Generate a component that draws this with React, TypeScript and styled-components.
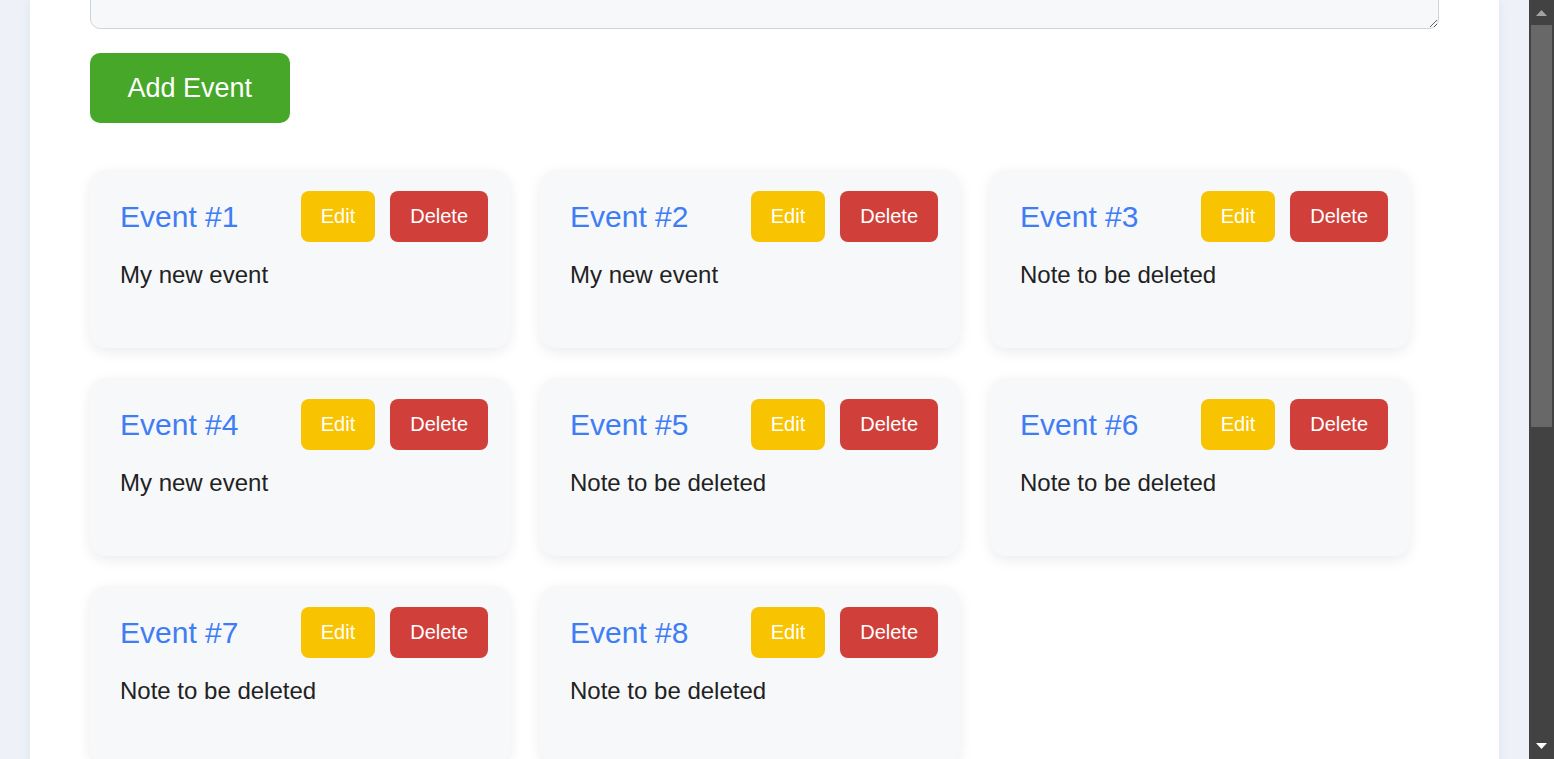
import React from "react";
import styled, { createGlobalStyle } from "styled-components";

const GlobalStyle = createGlobalStyle`
  html, body {
    margin: 0;
    padding: 0;
    height: 100%;
    overflow: hidden;
  }
  body {
    background: #eef2f8;
    font-family: "Liberation Sans", Arial, sans-serif;
    color: #222;
  }
`;

const Shell = styled.div`
  display: flex;
  height: 100vh;
  overflow: hidden;
`;

const Viewport = styled.div`
  flex: 1;
  min-width: 0;
  overflow: hidden;
`;

const Page = styled.div`
  box-sizing: border-box;
  min-height: 1339px;
  padding: 0 30px;
  display: flex;
  flex-direction: column;
`;

const Panel = styled.main`
  flex: 1;
  background: #ffffff;
  padding: 0 60px 60px;
  box-shadow: 0 0 12px rgba(40, 60, 110, 0.08);
`;

const NoteArea = styled.textarea`
  display: block;
  box-sizing: border-box;
  width: 100%;
  height: 100px;
  margin-top: -71px;
  border: 1px solid #cfd3da;
  border-radius: 10px;
  background: #f7f8fa;
  resize: vertical;
  font-family: "Liberation Sans", Arial, sans-serif;
  font-size: 22px;
`;

const AddButton = styled.button`
  display: block;
  margin-top: 24px;
  height: 70px;
  padding: 0 37.5px;
  border: none;
  border-radius: 10px;
  background: #47a728;
  color: #ffffff;
  font-family: "Liberation Sans", Arial, sans-serif;
  font-size: 27px;
  cursor: pointer;
`;

const CardGrid = styled.section`
  margin-top: 47px;
  display: grid;
  grid-template-columns: repeat(3, 420px);
  gap: 30px;
`;

const Card = styled.article`
  box-sizing: border-box;
  height: 178px;
  padding: 21px 22px 20px 30px;
  background: #f7f8fa;
  border-radius: 16px;
  box-shadow: 0 4px 14px rgba(0, 0, 0, 0.08);
`;

const CardHeader = styled.div`
  display: flex;
  align-items: center;
  justify-content: space-between;
`;

const Title = styled.h3`
  margin: 0;
  font-size: 30px;
  font-weight: 400;
  color: #3f7df6;
`;

const Actions = styled.div`
  display: flex;
  gap: 15px;
`;

const ActionButton = styled.button<{ $variant: "edit" | "delete" }>`
  height: 51px;
  padding: 0 20px;
  border: none;
  border-radius: 8px;
  background: ${(p) => (p.$variant === "edit" ? "#f8c300" : "#d13f3b")};
  color: #ffffff;
  font-family: "Liberation Sans", Arial, sans-serif;
  font-size: 20px;
  cursor: pointer;
`;

const Description = styled.p`
  margin: 19px 0 0;
  font-size: 24px;
  color: #222;
`;

const ScrollRail = styled.div`
  width: 25px;
  flex: none;
  background: #424242;
  display: flex;
  flex-direction: column;
`;

const RailButton = styled.div`
  height: 25px;
  flex: none;
  display: flex;
  align-items: center;
  justify-content: center;
`;

const Thumb = styled.div`
  height: 402px;
  margin: 0 2px;
  background: #686868;
`;

const RailSpacer = styled.div`
  flex: 1;
`;

const events = [
  { id: 1, text: "My new event" },
  { id: 2, text: "My new event" },
  { id: 3, text: "Note to be deleted" },
  { id: 4, text: "My new event" },
  { id: 5, text: "Note to be deleted" },
  { id: 6, text: "Note to be deleted" },
  { id: 7, text: "Note to be deleted" },
  { id: 8, text: "Note to be deleted" },
];

export default function App() {
  return (
    <>
      <GlobalStyle />
      <Shell>
        <Viewport>
          <Page>
            <Panel>
              <NoteArea />
              <AddButton>Add Event</AddButton>
              <CardGrid>
                {events.map((e) => (
                  <Card key={e.id}>
                    <CardHeader>
                      <Title>Event #{e.id}</Title>
                      <Actions>
                        <ActionButton $variant="edit">Edit</ActionButton>
                        <ActionButton $variant="delete">Delete</ActionButton>
                      </Actions>
                    </CardHeader>
                    <Description>{e.text}</Description>
                  </Card>
                ))}
              </CardGrid>
            </Panel>
          </Page>
        </Viewport>
        <ScrollRail>
          <RailButton>
            <svg width="11" height="6" viewBox="0 0 11 6" style={{ marginTop: 1 }}>
              <polygon points="5.5,0 11,6 0,6" fill="#a3a3a3" />
            </svg>
          </RailButton>
          <Thumb />
          <RailSpacer />
          <RailButton>
            <svg width="11" height="6" viewBox="0 0 11 6" style={{ marginTop: -1 }}>
              <polygon points="0,0 11,0 5.5,6" fill="#ffffff" />
            </svg>
          </RailButton>
        </ScrollRail>
      </Shell>
    </>
  );
}
